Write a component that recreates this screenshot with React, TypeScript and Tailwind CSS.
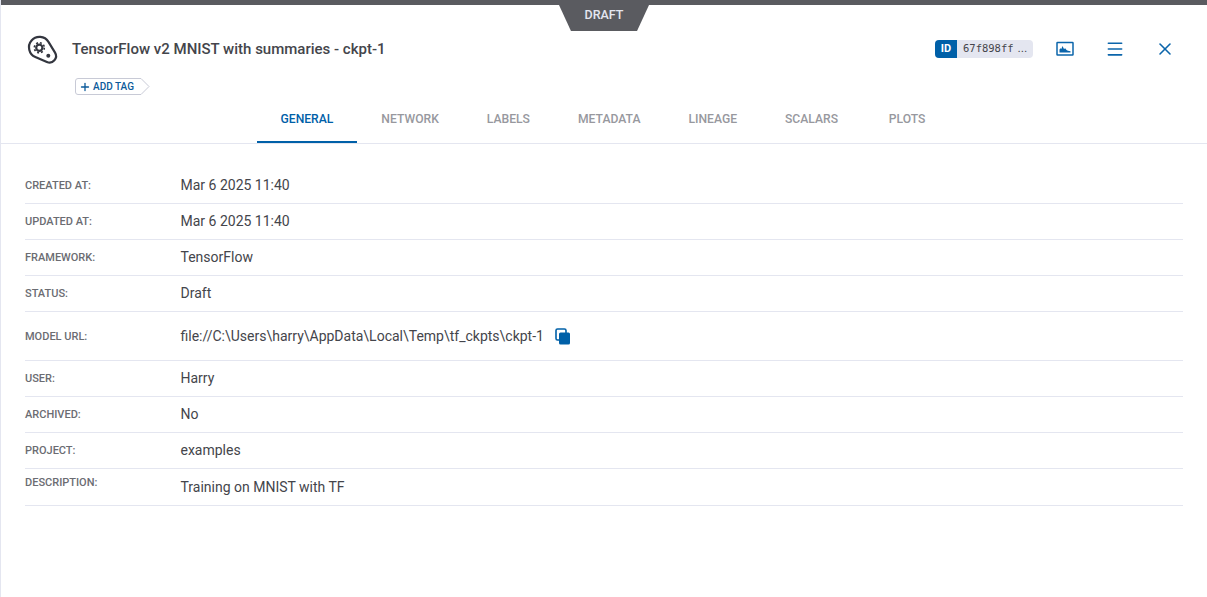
import { Menu, Plus, X } from "lucide-react";

const tabs = ["GENERAL", "NETWORK", "LABELS", "METADATA", "LINEAGE", "SCALARS", "PLOTS"];

function ModelIcon() {
  return (
    <svg width="32" height="30" viewBox="0 0 32 30" fill="none" className="shrink-0 overflow-visible">
      <path
        d="M9.33 22.94L20.92 27.97A6.5 6.5 0 0 0 29.04 18.61L22.46 7.82A10.5 10.5 0 1 0 9.33 22.94Z"
        stroke="#33363f"
        strokeWidth="2.2"
        strokeLinejoin="round"
      />
      <circle cx="13.3" cy="13.7" r="3.1" stroke="#33363f" strokeWidth="2.2" />
      <circle cx="13.3" cy="13.7" r="5" stroke="#33363f" strokeWidth="1.6" strokeDasharray="2 1.93" />
      <circle cx="22.3" cy="21.7" r="2" fill="#33363f" />
    </svg>
  );
}

function ScalarIcon() {
  return (
    <svg width="18" height="16" viewBox="0 0 18 16" fill="none">
      <rect x="1" y="1.5" width="16" height="12.5" stroke="#0b65ab" strokeWidth="1.5" rx="0.5" />
      <path d="M3.5 11.5V8.5l1-1.2.8.6L6.5 5 8 8l1.2-.8L10.5 9l1.5.8 2.5.4v1.3z" fill="#0b65ab" />
    </svg>
  );
}

function CopyIcon() {
  return (
    <svg width="16" height="17" viewBox="0 0 16 17" fill="none">
      <rect x="1" y="1" width="10" height="11" rx="1.5" stroke="#0060a8" strokeWidth="1.6" />
      <rect x="4" y="4.5" width="11" height="12" rx="1.5" fill="#0060a8" />
    </svg>
  );
}

function Row({
  label,
  value,
  height = "h-9",
  labelClass = "pt-px",
  valueClass = "pb-px",
  children,
}: {
  label: string;
  value: string;
  height?: string;
  labelClass?: string;
  valueClass?: string;
  children?: React.ReactNode;
}) {
  return (
    <div className={`flex items-center border-b border-[#e4e6f0] ${height}`}>
      <div className={`w-[155.5px] text-[11px] font-medium text-[#6b6c72] ${labelClass}`}>{label}</div>
      <div className={`flex items-center text-sm text-[#44454b] ${valueClass}`}>
        {value}
        {children}
      </div>
    </div>
  );
}

export default function App() {
  return (
    <div className="relative h-[597px] overflow-hidden border-l border-[#e4e6f0] bg-white font-['Roboto',sans-serif]">
      <div className="h-[5px] bg-[#5a5b60]" />
      {/* draft ribbon hangs over the header */}
      <div className="absolute left-[558px] top-[5px] flex h-[26px] w-[90px] items-center justify-center bg-[#5a5b60] pb-[6px] text-[12.5px] font-medium text-[#e4e6f0] [clip-path:polygon(0_0,100%_0,86.7%_100%,13.3%_100%)]">
        DRAFT
      </div>

      <div className="flex h-[59px] items-start pl-[25px] pr-[32px] pt-[29px]">
        <div className="flex h-[30px] w-full items-center">
          <ModelIcon />
          <div className="ml-[14px] text-[15px] font-medium text-[#44454b]">TensorFlow v2 MNIST with summaries - ckpt-1</div>
          <div className="ml-auto flex items-center">
            <div className="flex h-[18px] overflow-hidden rounded-[4px] bg-[#e4e6f0]">
              <div className="flex w-[22px] items-center justify-center bg-[#0060a8] text-[11px] font-bold text-white">ID</div>
              <div className="flex w-[76px] items-center whitespace-nowrap pl-[6px] font-['DejaVu_Sans_Mono',monospace] text-[10.5px] text-[#44454b]">
                67f898ff
                <span className="ml-[4px] font-['Liberation_Sans',sans-serif] text-[11.5px]">...</span>
              </div>
            </div>
            <div className="ml-[23px] flex w-[18px] justify-center">
              <ScalarIcon />
            </div>
            <Menu className="ml-[31px] text-[#0b65ab]" size={20} strokeWidth={1.9} />
            <X className="ml-[30px] text-[#0b65ab]" size={20} strokeWidth={1.9} />
          </div>
        </div>
      </div>

      <div className="relative ml-[74px] mt-[14px] flex h-[17px] w-[75px] items-center">
        <svg width="75" height="17" viewBox="0 0 75 17" className="absolute left-0 top-0" fill="none">
          <path d="M3 .5h63l8 8-8 8H3A2.5 2.5 0 0 1 .5 14V3A2.5 2.5 0 0 1 3 .5z" fill="#fff" stroke="#c8cad6" />
        </svg>
        <div className="relative flex items-center pl-[4px] text-[10px] font-medium text-[#0b5a9a]">
          <Plus size={12} strokeWidth={2.6} />
          <span className="ml-[2px]">ADD TAG</span>
        </div>
      </div>

      <div className="flex h-[49px] border-b border-[#e4e6f0] pl-[255.5px]">
        {tabs.map((tab, i) => (
          <div
            key={tab}
            className={`flex h-[48px] min-w-[90px] items-center justify-center border-b-2 px-6 pt-[2px] text-[12.15px] font-medium ${
              i === 0 ? "border-[#0060a8] text-[#0060a8]" : "border-transparent text-[#97989e]"
            }`}
          >
            {tab}
          </div>
        ))}
      </div>

      <div className="ml-[24px] mr-[24px] mt-[24px]">
        <Row label="CREATED AT:" value="Mar 6 2025 11:40" />
        <Row label="UPDATED AT:" value="Mar 6 2025 11:40" />
        <Row label="FRAMEWORK:" value="TensorFlow" />
        <Row label="STATUS:" value="Draft" />
        <Row
          label="MODEL URL:"
          value="file://C:\Users\harry\AppData\Local\Temp\tf_ckpts\ckpt-1"
          height="h-[49px]"
          labelClass="pt-[2px]"
          valueClass=""
        >
          <span className="ml-[11px]">
            <CopyIcon />
          </span>
        </Row>
        <Row label="USER:" value="Harry" />
        <Row label="ARCHIVED:" value="No" />
        <Row label="PROJECT:" value="examples" />
        <Row label="DESCRIPTION:" value="Training on MNIST with TF" height="h-[37px]" labelClass="pb-[7px]" valueClass="" />
      </div>
    </div>
  );
}
